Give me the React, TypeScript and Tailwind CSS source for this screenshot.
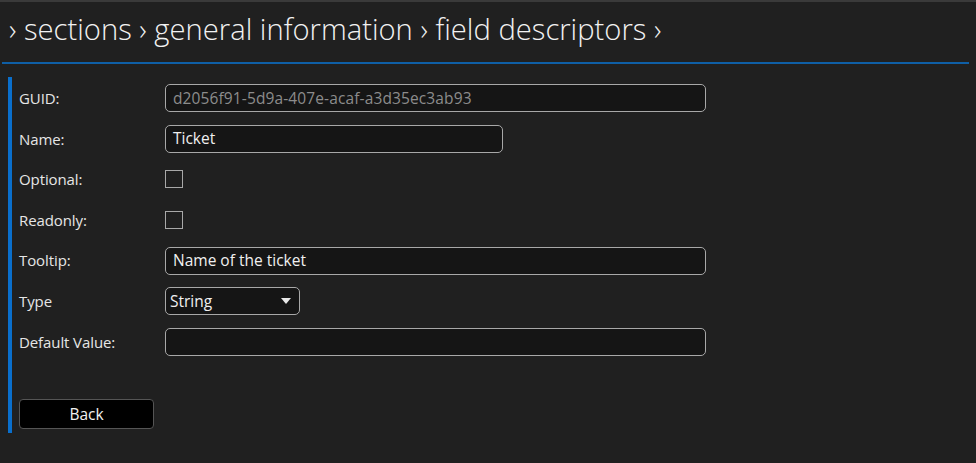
import React from "react";

const font = { fontFamily: '"Segoe UI", "Open Sans", "Noto Sans", sans-serif' };

function Row({ label, children }: { label: string; children: React.ReactNode }) {
  return (
    <div className="flex h-[40.6px] items-center">
      <div className="w-[146px] text-[15px] tracking-[-0.1px] text-[#e6e6e6]">{label}</div>
      {children}
    </div>
  );
}

function Input({ value, width, muted }: { value: string; width: string; muted?: boolean }) {
  return (
    <div
      className={`${width} flex h-[28px] items-center rounded-[5px] border-[1.5px] border-[#a8a8a8] bg-[#151515] px-[7px] text-[15.5px] ${
        muted ? "tracking-[0.12px] text-[#8c8c8c]" : "text-[#f0f0f0]"
      }`}
    >
      {value}
    </div>
  );
}

function Check() {
  return <div className="h-[18px] w-[18px] border-[1.5px] border-[#a8a8a8] bg-[#1f1f1f]" />;
}

export default function App() {
  return (
    <div className="h-[463px] w-[976px] overflow-hidden bg-[#202020]" style={font}>
      <div className="h-[2px] bg-[#3a3a3a]" />
      <div className="flex h-[60px] items-center pl-[9px] pb-[4px] text-[29.2px] font-light text-[#f2f2f2]">
        › sections › general information › field descriptors ›
      </div>
      <div className="ml-[2px] mr-[7px] h-[2px] bg-[#0f5fa6]" />
      <div className="ml-[8px] mt-[13px] flex h-[356px] border-l-[4px] border-[#0a6fcc] pl-[7px]">
        <div className="flex flex-col pt-[1px]">
          <Row label="GUID:">
            <Input value="d2056f91-5d9a-407e-acaf-a3d35ec3ab93" width="w-[541px]" muted />
          </Row>
          <Row label="Name:">
            <Input value="Ticket" width="w-[338px]" />
          </Row>
          <Row label="Optional:">
            <Check />
          </Row>
          <Row label="Readonly:">
            <Check />
          </Row>
          <Row label="Tooltip:">
            <Input value="Name of the ticket" width="w-[541px]" />
          </Row>
          <Row label="Type">
            <div className="flex h-[28px] w-[135px] items-center justify-between rounded-[5px] border-[1.5px] border-[#a8a8a8] bg-[#151515] pl-[4px] pr-[8px] text-[15.5px] text-[#f0f0f0]">
              <span>String</span>
              <svg width="10" height="6" viewBox="0 0 10 6">
                <path d="M0 0 L10 0 L5 6 Z" fill="#e8e8e8" />
              </svg>
            </div>
          </Row>
          <Row label="Default Value:">
            <Input value="" width="w-[541px]" />
          </Row>
          <div className="mt-[37px] flex h-[30px] w-[135px] items-center justify-center rounded-[4px] border border-[#555] bg-black text-[15.5px] text-[#f0f0f0]">
            Back
          </div>
        </div>
      </div>
    </div>
  );
}
